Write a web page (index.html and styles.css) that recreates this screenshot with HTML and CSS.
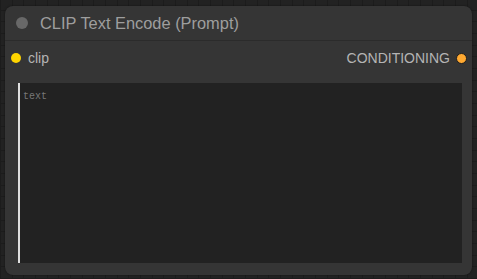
FILE: index.html
```html
<!DOCTYPE html>
<html>
<head>
<meta charset="utf-8">
<link rel="stylesheet" href="styles.css">
</head>
<body>
<div class="node">
  <div class="title">
    <span class="title-dot"></span>
    <span class="title-text">CLIP Text Encode (Prompt)</span>
  </div>
  <div class="slots">
    <div class="slot in"><span class="dot yellow"></span><span>clip</span></div>
    <div class="slot out"><span>CONDITIONING</span><span class="dot orange"></span></div>
  </div>
  <div class="widget">
    <div class="textarea"><span class="placeholder">text</span></div>
  </div>
</div>
</body>
</html>
```
FILE: styles.css
```css
html, body {
  margin: 0;
  padding: 0;
}
body {
  width: 477px;
  height: 279px;
  overflow: hidden;
  background-color: #222;
  background-image:
    repeating-linear-gradient(90deg, #1c1c1c 0 1px, transparent 1px 11.67px),
    repeating-linear-gradient(0deg, #1c1c1c 0 1px, transparent 1px 11.67px);
  font-family: "Liberation Sans", Arial, sans-serif;
  padding-top: 6px;
  box-sizing: border-box;
}
.node {
  margin-left: 5px;
  width: 467px;
  height: 269px;
  background: #353535;
  border-radius: 8px;
  display: flex;
  flex-direction: column;
  box-shadow: 0 0 2px rgba(0,0,0,0.5);
}
.title {
  height: 34px;
  border-bottom: 1px solid #2b2b2b;
  display: flex;
  align-items: center;
  padding-left: 11px;
  gap: 12px;
  flex-shrink: 0;
}
.title-dot {
  width: 12px;
  height: 12px;
  border-radius: 50%;
  background: #686868;
}
.title-text {
  color: #9e9e9e;
  font-size: 16.4px;
}
.slots {
  height: 35px;
  display: flex;
  justify-content: space-between;
  align-items: center;
  padding: 0 5px 0 6px;
  flex-shrink: 0;
}
.slot {
  display: flex;
  align-items: center;
  gap: 7px;
  color: #b4b4b4;
  font-size: 14px;
  margin-top: -1px;
}
.slot.out {
  gap: 6px;
}
.dot {
  width: 10px;
  height: 10px;
  border-radius: 50%;
  box-sizing: border-box;
}
.dot.yellow {
  background: #ffd500;
}
.dot.orange {
  background: #ffa931;
  border: 1px solid #1e1e1e;
  width: 11px;
  height: 11px;
}
.widget {
  flex: 1;
  padding: 7px 10px 12px 13px;
  display: flex;
}
.textarea {
  flex: 1;
  background: #222;
  border-left: 2px solid #e0e0e0;
  padding: 2px 0 0 3px;
}
.placeholder {
  font-family: "Liberation Mono", "DejaVu Sans Mono", monospace;
  font-size: 10px;
  color: #777;
}
```
